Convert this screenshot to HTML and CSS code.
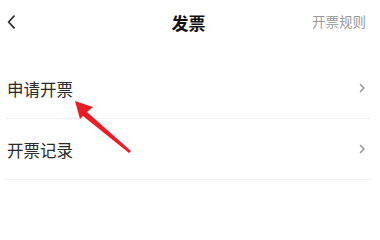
FILE: index.html
```html
<!DOCTYPE html>
<html lang="zh-CN">
<head>
<meta charset="utf-8">
<title>发票</title>
<link rel="stylesheet" href="styles.css">
</head>
<body>
<div class="page">
  <header class="nav">
    <span class="back">
      <svg width="9" height="14" viewBox="0 0 9 14"><path d="M7 1.2 L1.6 7 L7 12.8" fill="none" stroke="#333" stroke-width="1.8" stroke-linecap="round" stroke-linejoin="round"/></svg>
    </span>
    <h1 class="title">发票</h1>
    <span class="rule">开票规则</span>
  </header>
  <ul class="list">
    <li class="row"><span class="label">申请开票</span>
      <svg class="chev" width="7" height="10" viewBox="0 0 7 10"><path d="M1.5 1.5 L5 5 L1.5 8.5" fill="none" stroke="#999" stroke-width="1.6" stroke-linecap="round" stroke-linejoin="round"/></svg>
    </li>
    <li class="row"><span class="label">开票记录</span>
      <svg class="chev" width="7" height="10" viewBox="0 0 7 10"><path d="M1.5 1.5 L5 5 L1.5 8.5" fill="none" stroke="#999" stroke-width="1.6" stroke-linecap="round" stroke-linejoin="round"/></svg>
    </li>
  </ul>
  <svg class="pointer" width="380" height="218" viewBox="0 0 380 218">
    <polygon points="75,101 93,107 87,112 131,151 129,153 83,116 80,119" fill="#ec1c24"/>
  </svg>
</div>
</body>
</html>
```
FILE: styles.css
```css
html, body {
  margin: 0;
  padding: 0;
  background: #fff;
}
body {
  font-family: "Noto Sans CJK SC", "Noto Sans", sans-serif;
  color: #222;
}
.page {
  position: relative;
  width: 380px;
  height: 218px;
  overflow: hidden;
}
.nav {
  height: 44px;
  display: grid;
  grid-template-columns: 1fr auto 1fr;
  align-items: center;
  padding: 0 14px 0 7px;
}
.back {
  display: flex;
  align-items: center;
  justify-self: start;
}
.title {
  margin: 0;
  font-size: 17px;
  font-weight: 700;
  color: #111;
  line-height: 1;
  position: relative;
  left: 2px;
}
.rule {
  justify-self: end;
  font-size: 13.5px;
  color: #999;
  line-height: 1;
}
.list {
  list-style: none;
  margin: 14px 10px 0 6px;
  padding: 0;
}
.row {
  height: 60px;
  border-bottom: 1px solid #f1f1f1;
  display: flex;
  align-items: center;
  justify-content: space-between;
  padding: 0 4px 0 1px;
}
.label {
  font-size: 16.5px;
  color: #2a2a2a;
  line-height: 1;
  position: relative;
  top: 1px;
}
.chev {
  display: block;
}
.pointer {
  position: absolute;
  left: 0;
  top: 0;
  pointer-events: none;
}
```
